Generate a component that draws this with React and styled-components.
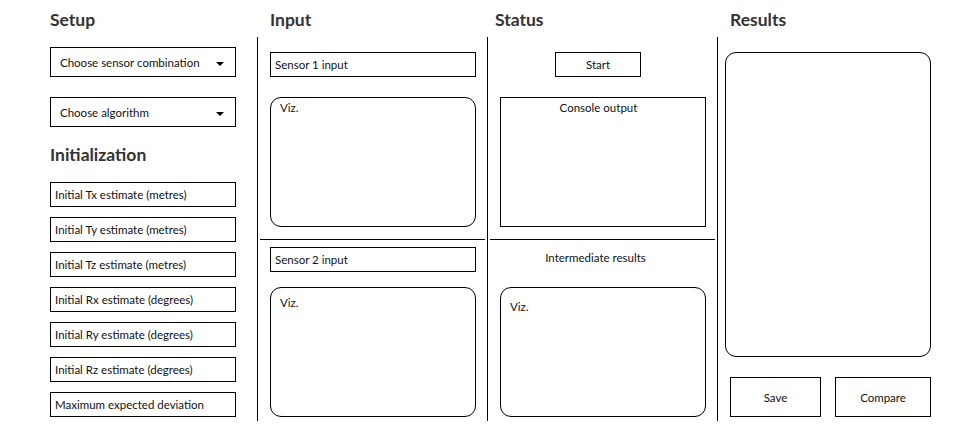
import React from "react";
import styled, { createGlobalStyle } from "styled-components";

const Global = createGlobalStyle`
  html, body { margin: 0; padding: 0; background: #fff; }
  body { font-family: Lato, "Noto Sans", sans-serif; color: #111; }
`;

const Page = styled.div`
  display: flex;
  width: 978px;
  height: 440px;
`;

const Column = styled.div`
  display: flex;
  flex-direction: column;
  width: ${(p) => p.$w}px;
  padding-left: ${(p) => p.$pl || 0}px;
  box-sizing: border-box;
`;

const Title = styled.h2`
  margin: 0;
  height: 37px;
  line-height: 40px;
  font-size: 17.5px;
  font-weight: 700;
  color: #333;
  padding-left: ${(p) => p.$indent || 0}px;
  box-sizing: border-box;
`;

const Body = styled.div`
  display: flex;
  flex-direction: column;
  height: 384px;
  border-left: ${(p) => (p.$line ? "1px solid #000" : "none")};
  padding-left: ${(p) => p.$pl || 0}px;
  box-sizing: border-box;
`;

const SubTitle = styled.h3`
  margin: 17px 0 0;
  height: 38px;
  line-height: 22px;
  font-size: 17.5px;
  font-weight: 700;
  color: #333;
`;

const Select = styled.div`
  display: flex;
  align-items: center;
  justify-content: space-between;
  width: 186px;
  height: 30px;
  margin-top: ${(p) => p.$mt}px;
  padding: 0 11px 0 9px;
  border: 1px solid #000;
  box-sizing: border-box;
  font-size: 11.5px;
`;

const Caret = styled.span`
  width: 0;
  height: 0;
  border-left: 4.5px solid transparent;
  border-right: 4.5px solid transparent;
  border-top: 4px solid #000;
  margin-top: 3px;
`;

const Field = styled.div`
  display: flex;
  align-items: center;
  width: ${(p) => p.$w || 186}px;
  height: 25px;
  margin-top: ${(p) => p.$mt}px;
  margin-left: ${(p) => p.$ml || 0}px;
  padding-left: 4px;
  border: 1px solid #000;
  box-sizing: border-box;
  font-size: 11.5px;
`;

const Panel = styled.div`
  width: ${(p) => p.$w || 206}px;
  height: ${(p) => p.$h}px;
  margin-top: ${(p) => p.$mt}px;
  margin-left: ${(p) => p.$ml || 0}px;
  border: 1px solid #000;
  border-radius: ${(p) => (p.$round ? 11 : 0)}px;
  box-sizing: border-box;
  padding: ${(p) => p.$pt || 4}px ${(p) => (p.$center ? 18 : 9)}px 0 9px;
  font-size: 11.5px;
  text-align: ${(p) => (p.$center ? "center" : "left")};
`;

const Divider = styled.div`
  height: 1px;
  background: #000;
  margin: ${(p) => p.$mt}px 2px 0 2px;
`;

const Button = styled.div`
  display: flex;
  align-items: center;
  justify-content: center;
  width: ${(p) => p.$w}px;
  height: ${(p) => p.$h}px;
  margin-top: ${(p) => p.$mt || 0}px;
  margin-left: ${(p) => p.$ml || 0}px;
  border: 1px solid #000;
  box-sizing: border-box;
  font-size: 11.5px;
`;

const Caption = styled.div`
  margin-top: 11px;
  height: 14px;
  line-height: 14px;
  font-size: 11.5px;
  text-align: center;
  padding-right: 14px;
`;

const ButtonRow = styled.div`
  display: flex;
  gap: 14px;
  margin-top: 20px;
  padding-left: 5px;
`;

const initFields = [
  "Initial Tx estimate (metres)",
  "Initial Ty estimate (metres)",
  "Initial Tz estimate (metres)",
  "Initial Rx estimate (degrees)",
  "Initial Ry estimate (degrees)",
  "Initial Rz estimate (degrees)",
  "Maximum expected deviation",
];

export default function App() {
  return (
    <>
      <Global />
      <Page>
        <Column $w={257} $pl={50}>
          <Title>Setup</Title>
          <Body>
            <Select $mt={10}>
              <span>Choose sensor combination</span>
              <Caret />
            </Select>
            <Select $mt={20}>
              <span>Choose algorithm</span>
              <Caret />
            </Select>
            <SubTitle>Initialization</SubTitle>
            {initFields.map((f, i) => (
              <Field key={f} $mt={i === 0 ? 0 : 10}>
                {f}
              </Field>
            ))}
          </Body>
        </Column>
        <Column $w={230}>
          <Title $indent={13}>Input</Title>
          <Body $line>
            <Field $w={206} $mt={15} $ml={12}>
              Sensor 1 input
            </Field>
            <Panel $round $h={130} $mt={20} $ml={12} $pt={3}>
              Viz.
            </Panel>
            <Divider $mt={12} />
            <Field $w={206} $mt={7} $ml={12}>
              Sensor 2 input
            </Field>
            <Panel $round $h={130} $mt={15} $ml={12} $pt={8}>
              Viz.
            </Panel>
          </Body>
        </Column>
        <Column $w={230}>
          <Title $indent={8}>Status</Title>
          <Body $line>
            <Button $w={86} $h={25} $mt={15} $ml={67}>
              Start
            </Button>
            <Panel $h={130} $mt={20} $ml={12} $pt={3} $center>
              Console output
            </Panel>
            <Divider $mt={12} />
            <Caption>Intermediate results</Caption>
            <Panel $round $h={130} $mt={22} $ml={12} $pt={12}>
              Viz.
            </Panel>
          </Body>
        </Column>
        <Column $w={261}>
          <Title $indent={13}>Results</Title>
          <Body $line $pl={7}>
            <Panel $round $h={305} $mt={15} />
            <ButtonRow>
              <Button $w={91} $h={40}>Save</Button>
              <Button $w={96} $h={40}>Compare</Button>
            </ButtonRow>
          </Body>
        </Column>
      </Page>
    </>
  );
}
